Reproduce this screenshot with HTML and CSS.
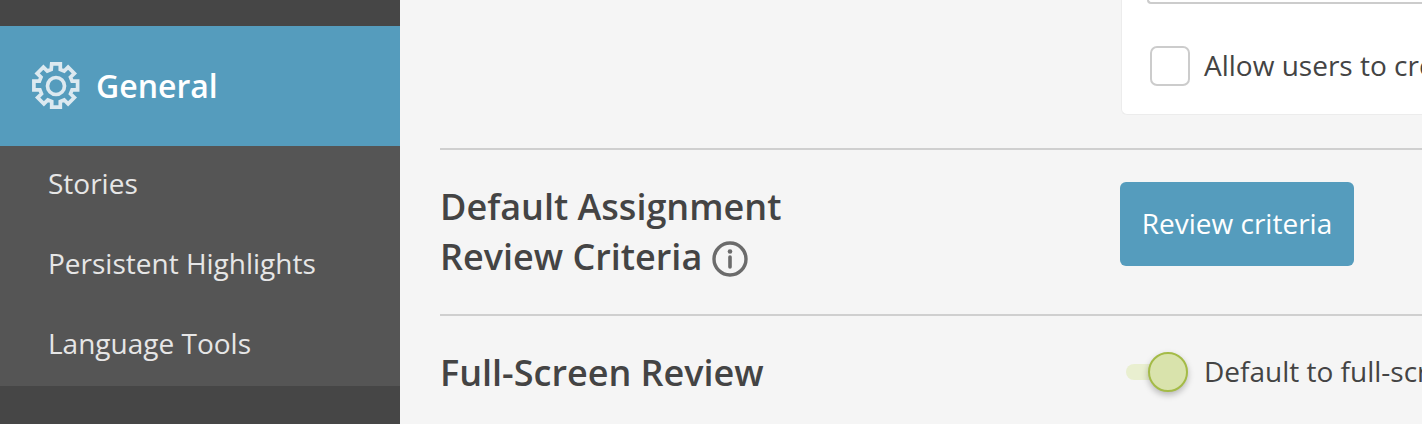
FILE: index.html
```html
<!DOCTYPE html>
<html lang="en">
<head>
    <meta charset="UTF-8">
    <meta name="viewport" content="width=device-width, initial-scale=1.0">
    <title>Settings</title>
    <link rel="stylesheet" href="styles.css">
</head>
<body>
    <div class="sidebar">
        <div class="nav-active">
            <svg class="gear" width="48" height="48" viewBox="0 0 48 48" fill="none" stroke="#dce9f0" stroke-width="3.7" stroke-linejoin="miter">
                <path d="M19.7 1.9h8.6v5.5l3.9 1.6 3.9-3.9 6.3 6.3-3.9 3.9 1.6 3.9h5.5v8.6h-5.5l-1.6 3.9 3.9 3.9-6.3 6.3-3.9-3.9-3.9 1.6v5.5h-8.6v-5.5l-3.9-1.6-3.9 3.9-6.3-6.3 3.9-3.9-1.6-3.9H1.9v-8.6h5.5l1.6-3.9-3.9-3.9 6.3-6.3 3.9 3.9 3.9-1.6z"/>
                <circle cx="24" cy="24" r="8.5"/>
            </svg>
            <span class="nav-title">General</span>
        </div>
        <ul class="subnav">
            <li>Stories</li>
            <li>Persistent Highlights</li>
            <li>Language Tools</li>
        </ul>
    </div>

    <div class="main">
        <div class="row row-first">
            <div class="row-label"></div>
            <div class="card">
                <div class="input-stub"></div>
                <label class="check-line">
                    <span class="checkbox"></span>
                    <span class="nowrap">Allow users to create new stories</span>
                </label>
            </div>
        </div>

        <div class="row row-review">
            <h3 class="row-label">Default Assignment<br>Review Criteria
                <svg class="info" width="36" height="36" viewBox="0 0 36 36" fill="none">
                    <circle cx="18" cy="18" r="16" stroke="#6b6b6b" stroke-width="3.4"/>
                    <circle cx="18" cy="10.5" r="2.3" fill="#6b6b6b"/>
                    <path d="M18 16v10" stroke="#6b6b6b" stroke-width="3.6" stroke-linecap="round"/>
                </svg>
            </h3>
            <button class="btn">Review criteria</button>
        </div>

        <div class="row row-full">
            <h3 class="row-label">Full-Screen Review</h3>
            <div class="toggle-line">
                <span class="toggle"><span class="knob"></span></span>
                <span class="nowrap">Default to full-screen review</span>
            </div>
        </div>
    </div>
</body>
</html>
```

FILE: styles.css
```css
html, body {
    margin: 0;
    padding: 0;
    height: 424px;
    overflow: hidden;
}
body {
    display: flex;
    font-family: "Open Sans", sans-serif;
    background-color: #f5f5f5;
    color: #444;
}
.sidebar {
    width: 400px;
    flex-shrink: 0;
    padding-top: 26px;
    background-color: #464646;
}
.nav-active {
    display: flex;
    align-items: center;
    gap: 16px;
    height: 120px;
    padding-left: 32px;
    background-color: #559cbd;
    color: #fff;
    font-size: 32px;
    font-weight: 600;
}
.nav-title {
    padding-bottom: 2px;
}
.subnav {
    list-style: none;
    margin: 0;
    padding: 0;
    background-color: #555;
}
.subnav li {
    height: 80px;
    line-height: 74px;
    padding-left: 48px;
    font-size: 28px;
    color: #e6e6e6;
}
.main {
    flex: 1;
    min-width: 0;
    padding-left: 40px;
    overflow: hidden;
}
.row {
    display: flex;
    border-bottom: 2px solid #cfcfcf;
}
.row-label {
    width: 680px;
    flex-shrink: 0;
    margin: 0;
    font-size: 36px;
    font-weight: 600;
    line-height: 50px;
    color: #444;
}
.row-first {
    height: 148px;
}
.card {
    box-sizing: border-box;
    flex: 1;
    height: 115px;
    padding: 0 0 0 28px;
    margin-left: 1px;
    background-color: #fff;
    border: 1px solid #ececec;
    border-top: 0;
    border-right: 0;
    border-radius: 0 0 0 6px;
}
.input-stub {
    height: 2px;
    margin-left: -3px;
    border: 2px solid #ccc;
    border-top: 0;
    border-right: 0;
    border-radius: 0 0 0 6px;
}
.check-line {
    display: flex;
    align-items: center;
    gap: 14px;
    margin-top: 40px;
    font-size: 28px;
}
.checkbox {
    box-sizing: border-box;
    width: 40px;
    height: 40px;
    flex-shrink: 0;
    background-color: #fff;
    border: 2px solid #ccc;
    border-radius: 7px;
    margin-top: 2px;
}
.nowrap {
    white-space: nowrap;
}
.row-review {
    height: 164px;
    box-sizing: content-box;
}
.row-review .row-label {
    padding-top: 32px;
}
.info {
    margin-left: 0;
    vertical-align: -7px;
}
.btn {
    align-self: flex-start;
    margin-top: 32px;
    width: 234px;
    height: 84px;
    padding: 0 0 2px;
    background-color: #559cbd;
    color: #fff;
    border: none;
    border-radius: 6px;
    font-family: inherit;
    font-size: 28px;
    cursor: pointer;
}
.row-full {
    border-bottom: 0;
}
.row-full .row-label {
    padding-top: 32px;
}
.toggle-line {
    display: flex;
    align-items: center;
    gap: 16px;
    margin-top: 35px;
    height: 40px;
    margin-left: 6px;
    font-size: 28px;
}
.toggle {
    position: relative;
    display: block;
    width: 62px;
    height: 16px;
    flex-shrink: 0;
    margin-top: 2px;
    background-color: #e9efd0;
    border-radius: 8px;
}
.knob {
    position: absolute;
    top: -12px;
    left: 22px;
    box-sizing: border-box;
    width: 40px;
    height: 40px;
    background-color: #d9e3ac;
    border: 2px solid #a4bb47;
    border-radius: 50%;
    box-shadow: 0 3px 6px rgba(0, 0, 0, 0.25);
}
```
